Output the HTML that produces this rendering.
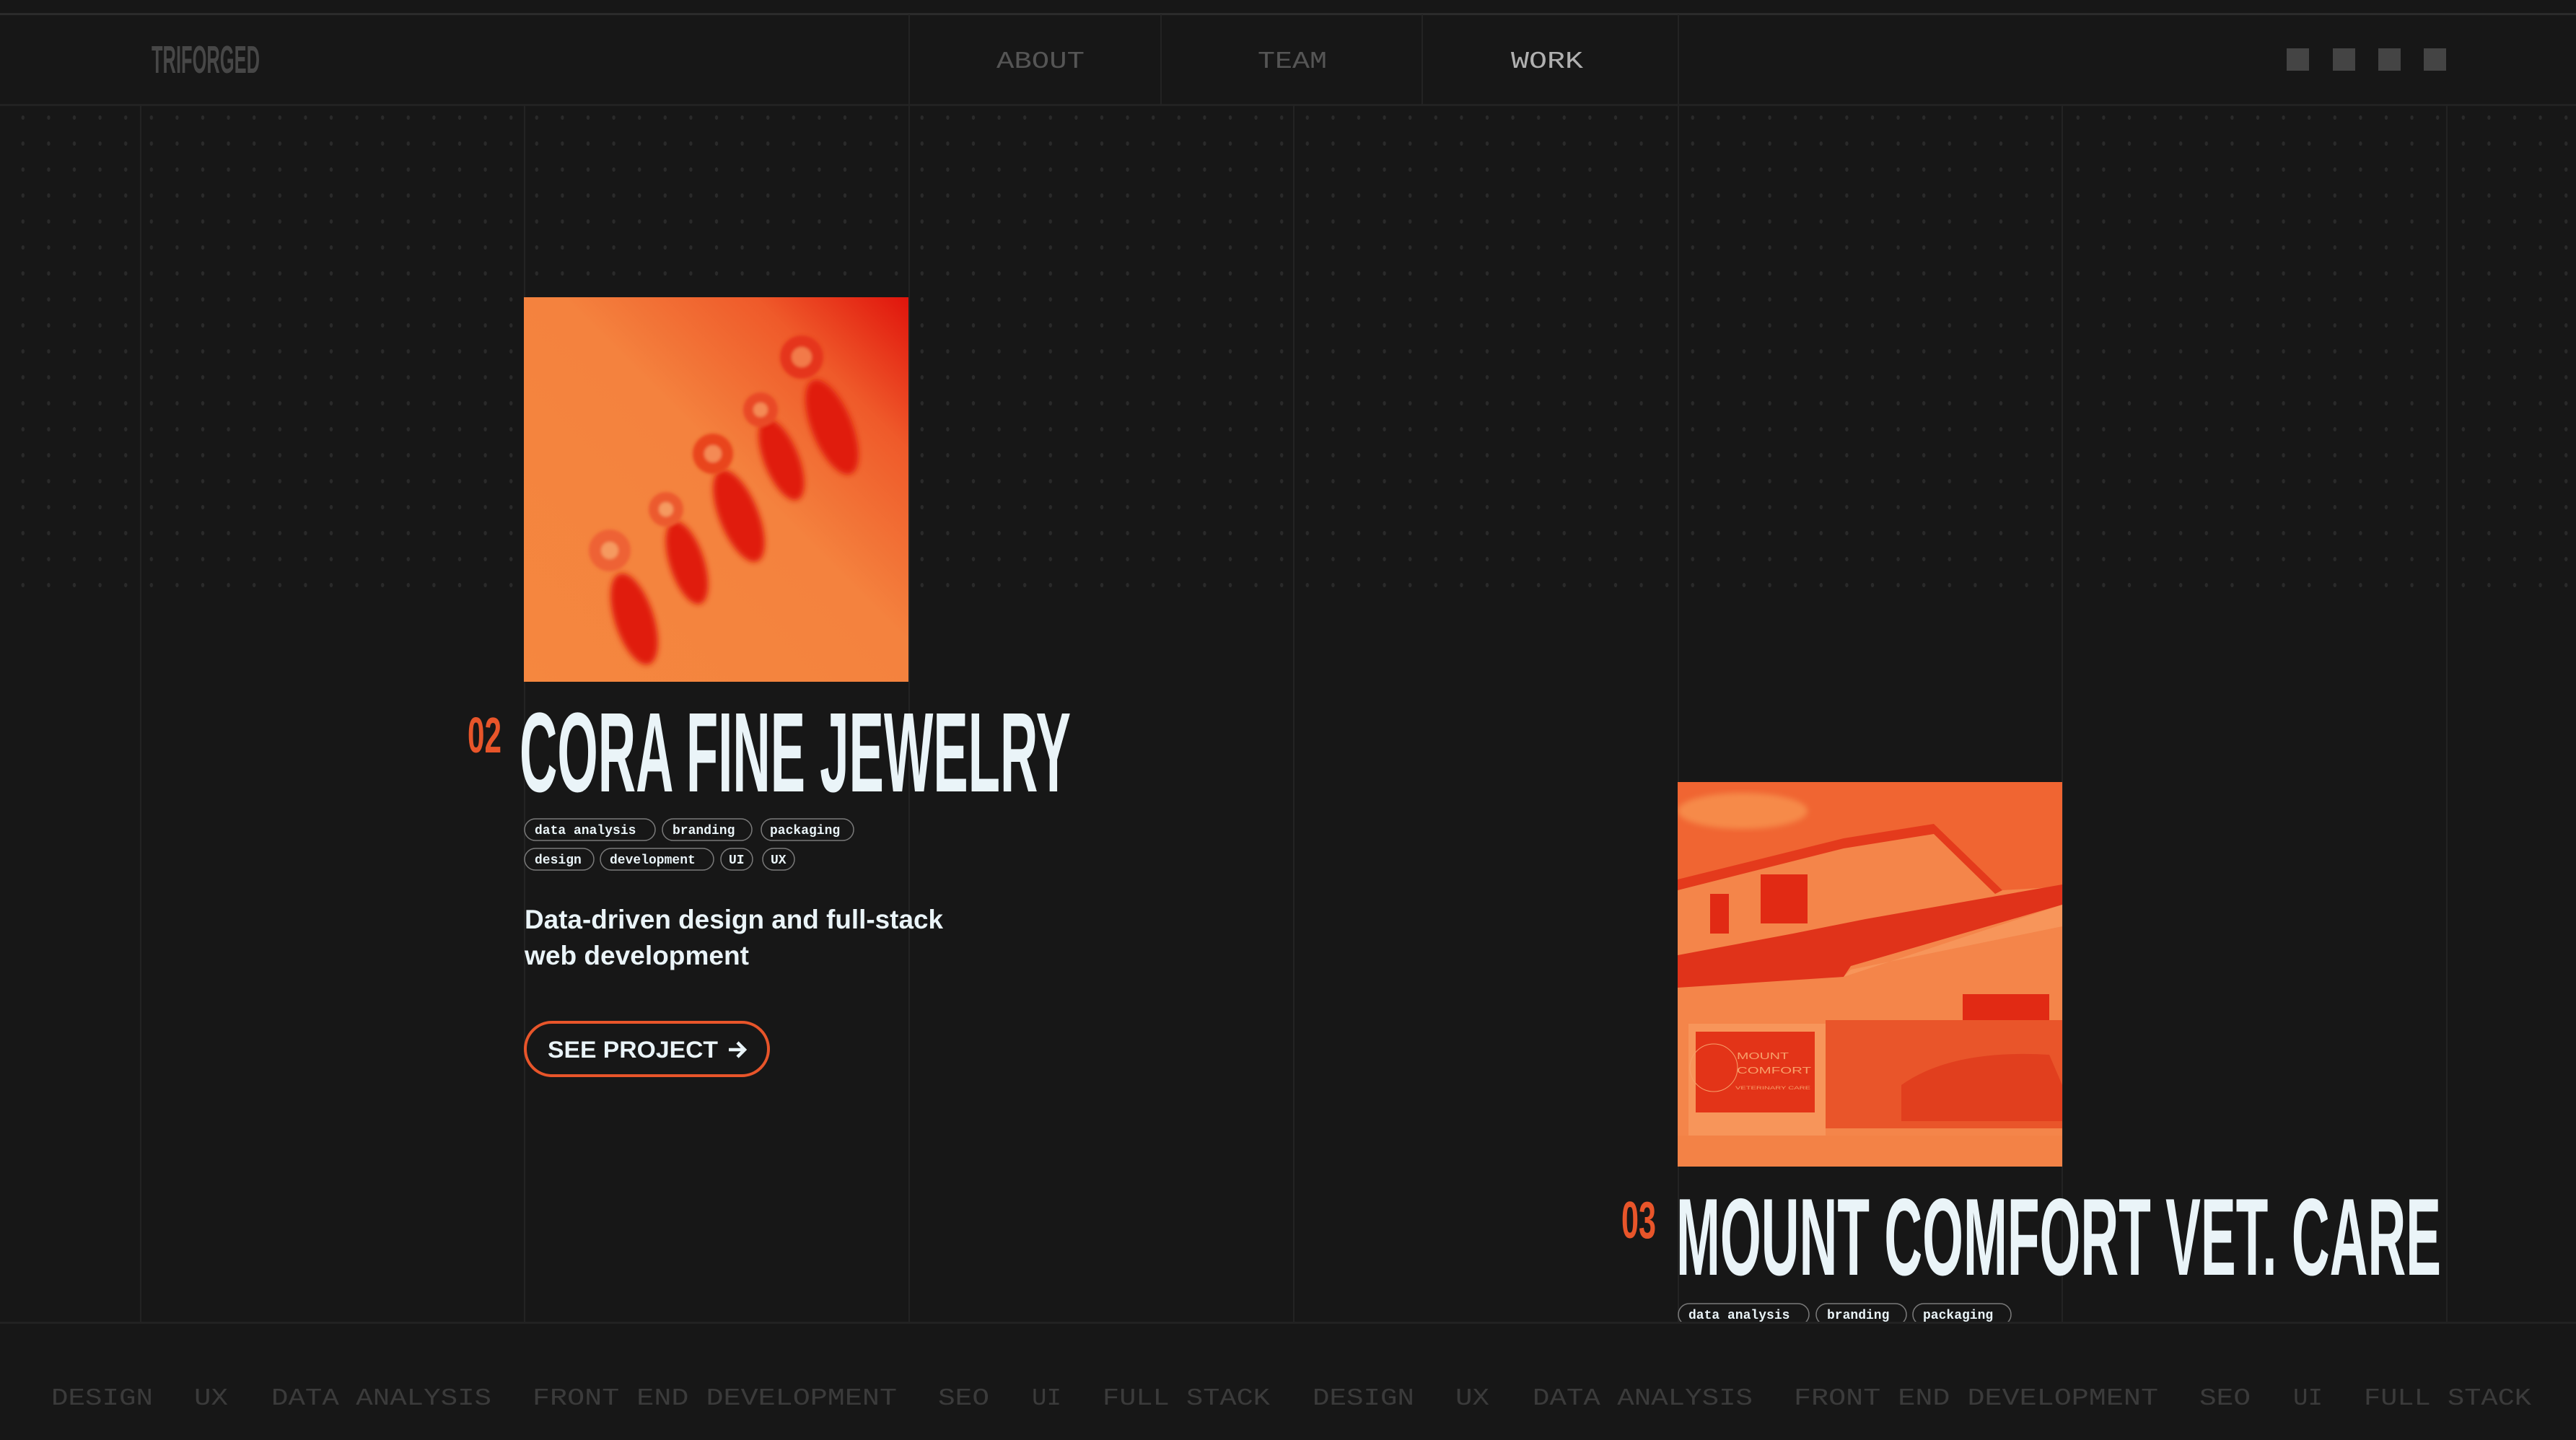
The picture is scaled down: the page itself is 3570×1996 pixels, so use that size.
<!DOCTYPE html>
<html><head><meta charset="utf-8"><style>
html,body{margin:0;padding:0;background:#171717;width:3570px;height:1996px;overflow:hidden}
svg{position:absolute;left:0;top:0}
</style></head><body>
<svg width="3570" height="1996" viewBox="0 0 3570 1996" xmlns="http://www.w3.org/2000/svg">
<defs>
<pattern id="dots" x="14" y="145" width="35.6" height="36" patternUnits="userSpaceOnUse">
<ellipse cx="17.8" cy="18" rx="2.2" ry="3" fill="#2a2a2a"/>
</pattern>
<filter id="blur4"><feGaussianBlur stdDeviation="4"/></filter>
<filter id="blur2"><feGaussianBlur stdDeviation="2"/></filter>
<linearGradient id="jg" x1="0" y1="1" x2="1" y2="0">
<stop offset="0" stop-color="#f5873f"/><stop offset="0.55" stop-color="#f4823e"/><stop offset="0.8" stop-color="#ef5a2a"/><stop offset="1" stop-color="#e0140c"/>
</linearGradient>
<clipPath id="c1"><rect x="726" y="412" width="533" height="533"/></clipPath>
<clipPath id="c2"><rect x="2325" y="1084" width="533" height="533"/></clipPath>
<clipPath id="main"><rect x="0" y="146" width="3570" height="1686"/></clipPath>
</defs>
<rect width="3570" height="1996" fill="#171717"/>
<rect x="0" y="146" width="3570" height="668" fill="url(#dots)"/>
<rect x="0" y="18" width="3570" height="3" fill="#2b2b2b"/>
<rect x="0" y="144" width="3570" height="3" fill="#222"/>
<g fill="#232323">
<rect x="194" y="146" width="2" height="1686"/><rect x="726" y="146" width="2" height="1686"/>
<rect x="1259" y="20" width="2" height="1812"/><rect x="1792" y="146" width="2" height="1686"/>
<rect x="2325" y="20" width="2" height="1812"/><rect x="2857" y="146" width="2" height="1686"/>
<rect x="3390" y="146" width="2" height="1686"/>
<rect x="1608" y="20" width="2" height="126"/><rect x="1970" y="20" width="2" height="126"/>
</g>
<rect x="0" y="1832" width="3570" height="3" fill="#222"/>
<text x="210" y="101" font-family="Liberation Sans, sans-serif" font-weight="bold" font-size="54" fill="#474747" textLength="150" lengthAdjust="spacingAndGlyphs">TRIFORGED</text>
<g font-family="Liberation Mono, monospace" font-size="33">
<text x="1381" y="94" fill="#555" textLength="122" lengthAdjust="spacingAndGlyphs">ABOUT</text>
<text x="1743" y="94" fill="#555" textLength="96" lengthAdjust="spacingAndGlyphs">TEAM</text>
<text x="2094" y="94" fill="#b0b0b0" textLength="100" lengthAdjust="spacingAndGlyphs">WORK</text>
</g>
<g fill="#444">
<rect x="3169" y="67" width="31" height="31"/><rect x="3233" y="67" width="31" height="31"/>
<rect x="3296" y="67" width="31" height="31"/><rect x="3359" y="67" width="31" height="31"/>
</g>
<g clip-path="url(#c1)">
<rect x="726" y="412" width="533" height="533" fill="url(#jg)"/>
<g transform="translate(726,412)" filter="url(#blur4)" fill="#e01c0e">
<ellipse cx="427" cy="180" rx="28" ry="70" transform="rotate(-22 427 180)"/>
<ellipse cx="357" cy="225" rx="24" ry="60" transform="rotate(-22 357 225)"/>
<ellipse cx="298" cy="303" rx="27" ry="68" transform="rotate(-22 298 303)"/>
<ellipse cx="226" cy="368" rx="24" ry="60" transform="rotate(-18 226 368)"/>
<ellipse cx="153" cy="446" rx="27" ry="66" transform="rotate(-18 153 446)"/>
</g>
<g transform="translate(726,412)" filter="url(#blur2)">
<circle cx="385" cy="83" r="30" fill="#e5361c"/><circle cx="385" cy="83" r="14" fill="#f27a48"/>
<circle cx="328" cy="156" r="24" fill="#e94a26"/><circle cx="328" cy="156" r="10" fill="#f48a55"/>
<circle cx="262" cy="217" r="28" fill="#e9441f"/><circle cx="262" cy="217" r="12" fill="#f48a55"/>
<circle cx="197" cy="294" r="24" fill="#ec5a2f"/><circle cx="197" cy="294" r="10" fill="#f59a60"/>
<circle cx="119" cy="351" r="29" fill="#ee6234"/><circle cx="119" cy="351" r="12" fill="#f59a60"/>
</g>
</g>
<text x="648" y="1043" font-family="Liberation Sans, sans-serif" font-weight="bold" font-size="70" fill="#e8552a" textLength="47" lengthAdjust="spacingAndGlyphs">02</text>
<text x="720" y="1097" font-family="Liberation Sans, sans-serif" font-weight="bold" font-size="157" fill="#eaf4f8" textLength="764" lengthAdjust="spacingAndGlyphs">CORA FINE JEWELRY</text>
<g font-family="Liberation Mono, monospace" font-size="18" font-weight="bold" fill="#eaf4f8">
<g fill="none" stroke="#7a7a7a" stroke-width="1.5">
<rect x="727" y="1135" width="181" height="30" rx="15"/><rect x="918" y="1135" width="124" height="30" rx="15"/><rect x="1055" y="1135" width="128" height="30" rx="15"/>
<rect x="727" y="1176" width="96" height="30" rx="15"/><rect x="832" y="1176" width="157" height="30" rx="15"/><rect x="999" y="1176" width="44" height="30" rx="15"/><rect x="1057" y="1176" width="44" height="30" rx="15"/>
</g>
<text x="741" y="1156">data analysis</text><text x="932" y="1156">branding</text><text x="1067" y="1156">packaging</text>
<text x="741" y="1197">design</text><text x="845" y="1197">development</text><text x="1010" y="1197">UI</text><text x="1068" y="1197">UX</text>
</g>
<g font-family="Liberation Sans, sans-serif" font-weight="bold" font-size="37" fill="#eaf4f8">
<text x="727" y="1287" textLength="580" lengthAdjust="spacingAndGlyphs">Data-driven design and full-stack</text>
<text x="727" y="1337" textLength="311" lengthAdjust="spacingAndGlyphs">web development</text>
</g>
<rect x="728" y="1417" width="337" height="74" rx="37" fill="none" stroke="#e8552a" stroke-width="4"/>
<text x="759" y="1466" font-family="Liberation Sans, sans-serif" font-weight="bold" font-size="32" fill="#eaf4f8" textLength="236" lengthAdjust="spacingAndGlyphs">SEE PROJECT</text>
<path d="M1010 1455 H1032 M1022 1445 L1032 1455 L1022 1465" stroke="#eaf4f8" stroke-width="4.5" fill="none"/>
<g clip-path="url(#c2)">
<g transform="translate(2325,1084)">
<rect width="533" height="533" fill="#f06532"/>
<ellipse cx="90" cy="40" rx="90" ry="25" fill="#f68a4a" filter="url(#blur4)"/>
<polygon points="0,140 230,80 355,60 450,150 533,145 533,533 0,533" fill="#f4854a"/>
<polygon points="0,135 230,78 355,58 450,150 440,155 355,72 230,92 0,150" fill="#e43a1c"/>
<rect x="45" y="155" width="26" height="55" fill="#e12a14"/>
<rect x="115" y="128" width="65" height="68" fill="#e12a14"/>
<polygon points="0,240 160,210 260,190 533,142 533,170 240,255 230,270 0,285" fill="#e0331a"/>
<polygon points="230,270 533,170 533,200 240,260" fill="#f7955a"/>
<rect x="395" y="294" width="120" height="46" fill="#e12a14"/>
<rect x="15" y="335" width="190" height="170" fill="#f7955a"/>
<rect x="25" y="346" width="165" height="112" fill="#e33418"/>
<rect x="205" y="330" width="328" height="150" fill="#e9552a"/>
<path d="M310 420 Q380 370 515 378 L533 420 L533 470 L310 470 Z" fill="#df3a1c" opacity="0.8"/>
<rect x="0" y="490" width="533" height="43" fill="#f38246"/>
<g font-family="Liberation Sans, sans-serif" fill="#f7a06a">
<text x="82" y="384" font-size="13" textLength="72" lengthAdjust="spacingAndGlyphs">MOUNT</text>
<text x="82" y="404" font-size="13" textLength="103" lengthAdjust="spacingAndGlyphs">COMFORT</text>
<text x="80" y="426" font-size="6" textLength="104" lengthAdjust="spacingAndGlyphs">VETERINARY CARE</text>
</g>
<circle cx="50" cy="396" r="33" fill="none" stroke="#f7a06a" stroke-width="1"/>
</g>
</g>
<g clip-path="url(#main)">
<text x="2247" y="1716" font-family="Liberation Sans, sans-serif" font-weight="bold" font-size="72" fill="#e8552a" textLength="48" lengthAdjust="spacingAndGlyphs">03</text>
<text x="2323" y="1767" font-family="Liberation Sans, sans-serif" font-weight="bold" font-size="152" fill="#eaf4f8" textLength="1060" lengthAdjust="spacingAndGlyphs">MOUNT COMFORT VET. CARE</text>
<g fill="none" stroke="#7a7a7a" stroke-width="1.5">
<rect x="2326" y="1807" width="181" height="30" rx="15"/><rect x="2517" y="1807" width="125" height="30" rx="15"/><rect x="2651" y="1807" width="136" height="30" rx="15"/>
</g>
<g font-family="Liberation Mono, monospace" font-size="18" font-weight="bold" fill="#eaf4f8">
<text x="2340" y="1828">data analysis</text><text x="2532" y="1828">branding</text><text x="2665" y="1828">packaging</text>
</g>
</g>
<g font-family="Liberation Mono, monospace" font-size="33" fill="#3b3b3b">
<text x="71" y="1947" textLength="141" lengthAdjust="spacingAndGlyphs">DESIGN</text>
<text x="269" y="1947" textLength="47" lengthAdjust="spacingAndGlyphs">UX</text>
<text x="376" y="1947" textLength="305" lengthAdjust="spacingAndGlyphs">DATA ANALYSIS</text>
<text x="738" y="1947" textLength="505" lengthAdjust="spacingAndGlyphs">FRONT END DEVELOPMENT</text>
<text x="1300" y="1947" textLength="71" lengthAdjust="spacingAndGlyphs">SEO</text>
<text x="1430" y="1947" textLength="41" lengthAdjust="spacingAndGlyphs">UI</text>
<text x="1528" y="1947" textLength="232" lengthAdjust="spacingAndGlyphs">FULL STACK</text>
<text x="1819" y="1947" textLength="141" lengthAdjust="spacingAndGlyphs">DESIGN</text>
<text x="2017" y="1947" textLength="47" lengthAdjust="spacingAndGlyphs">UX</text>
<text x="2124" y="1947" textLength="305" lengthAdjust="spacingAndGlyphs">DATA ANALYSIS</text>
<text x="2486" y="1947" textLength="505" lengthAdjust="spacingAndGlyphs">FRONT END DEVELOPMENT</text>
<text x="3048" y="1947" textLength="71" lengthAdjust="spacingAndGlyphs">SEO</text>
<text x="3178" y="1947" textLength="41" lengthAdjust="spacingAndGlyphs">UI</text>
<text x="3276" y="1947" textLength="232" lengthAdjust="spacingAndGlyphs">FULL STACK</text>
</g>
</svg>
</body></html>
